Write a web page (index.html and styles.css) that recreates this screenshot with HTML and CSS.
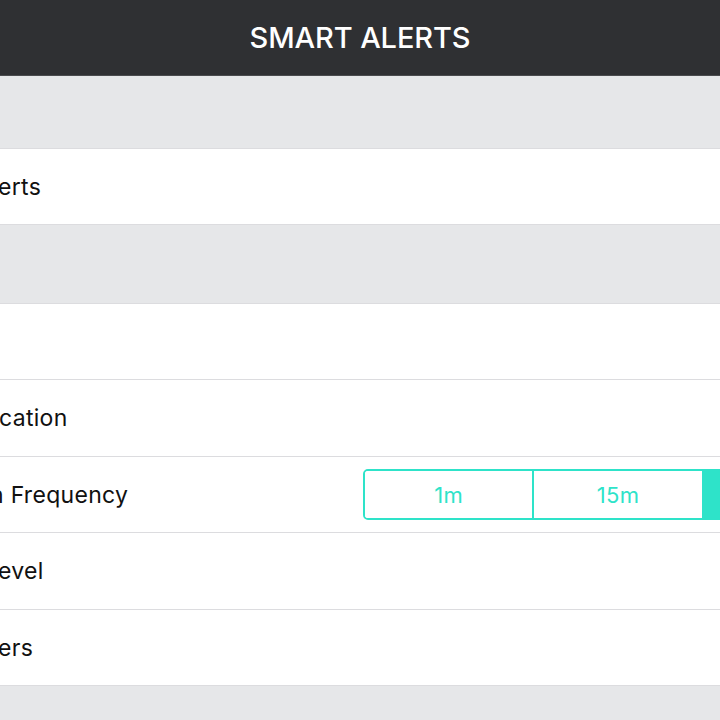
FILE: index.html
```html
<!DOCTYPE html>
<html lang="en">
<head>
  <meta charset="UTF-8" />
  <meta name="viewport" content="width=device-width, initial-scale=1" />
  <title>Smart Alerts</title>
  <link rel="stylesheet" href="styles.css">
</head>
<body>

  <header class="nav-bar">
    <h1>SMART ALERTS</h1>
  </header>

  <div class="section-gap first"></div>

  <div class="cell"><span class="label cut-e">erts</span></div>

  <div class="section-gap second"></div>

  <div class="cell"></div>
  <div class="cell tall"><span class="label cut-c">cation</span></div>
  <div class="cell">
    <span class="label cut-n">n Frequency</span>
    <div class="segmented">
      <button class="segment">1m</button>
      <button class="segment">15m</button>
      <button class="segment selected">1h</button>
    </div>
  </div>
  <div class="cell tall"><span class="label cut-e">evel</span></div>
  <div class="cell"><span class="label cut-e">ers</span></div>

  <div class="section-gap last"></div>

</body>
</html>
```

FILE: styles.css
```css
:root {
  --teal: #2ee3c9;
  --line: #dcdcdf;
  --group: #e6e7e9;
}

* {
  box-sizing: border-box;
}

body {
  margin: 0;
  font-family: Inter, "Noto Sans", sans-serif;
  background: var(--group);
  color: #111;
  overflow: hidden;
  height: 720px;
}

.nav-bar {
  height: 76px;
  background: #2f3033;
  border-bottom: 1px solid #4a4b4e;
  display: flex;
  justify-content: center;
  align-items: center;
}

.nav-bar h1 {
  margin: 0;
  color: #fff;
  font-size: 29px;
  font-weight: 500;
  letter-spacing: -0.1px;
}

.section-gap {
  background: var(--group);
  border-bottom: 1px solid var(--line);
}

.section-gap.first  { height: 73px; }
.section-gap.second { height: 79px; }
.section-gap.last   { border-bottom: none; height: 40px; }

.cell {
  height: 76px;
  background: #fff;
  border-bottom: 1px solid var(--line);
  display: flex;
  align-items: center;
  justify-content: space-between;
  overflow: hidden;
}

.cell.tall {
  height: 77px;
}

.label {
  font-size: 23px;
  letter-spacing: 0.3px;
  white-space: nowrap;
}

.cut-e { margin-left: -2px; }
.cut-c { margin-left: -1px; }
.cut-n { margin-left: -10px; }

.segmented {
  display: flex;
  flex-shrink: 0;
  width: 510px;
  height: 51px;
  margin-right: -153px;
  border: 2px solid var(--teal);
  border-radius: 5px;
  overflow: hidden;
}

.segment {
  flex: 1;
  border: none;
  border-right: 2px solid var(--teal);
  background: #fff;
  color: var(--teal);
  font-family: Inter, "Noto Sans", sans-serif;
  font-size: 22px;
  letter-spacing: 0.3px;
  padding: 0;
}

.segment:last-child {
  border-right: none;
}

.segment.selected {
  background: var(--teal);
  color: #fff;
}
```
